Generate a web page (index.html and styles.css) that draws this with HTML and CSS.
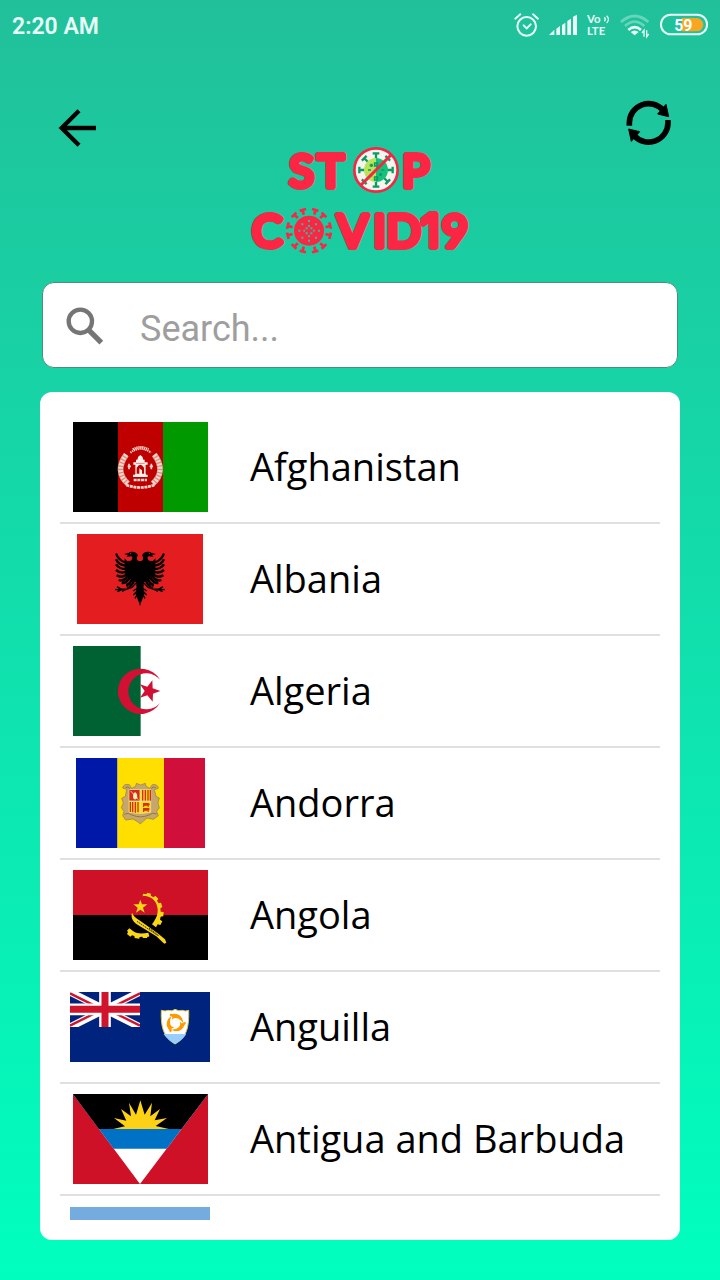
FILE: index.html
```html
<!DOCTYPE html>
<html lang="en">
<head>
<meta charset="utf-8">
<meta name="viewport" content="width=device-width, initial-scale=1">
<title>Stop Covid19</title>
<link rel="stylesheet" href="styles.css">
</head>
<body>
<div class="app">
  <div class="status">
    <span class="time">2:20 AM</span>
    <div class="status-icons">
      <svg width="26" height="50" viewBox="42 0 78 150" fill="none" stroke="#e9fff8" stroke-width="6" stroke-linecap="round" aria-hidden="true"><circle cx="80" cy="79" r="28"/><path d="M71 76l9 9 12-12M46 56l15-13M99 43l15 13"/></svg>
      <svg width="30" height="50" viewBox="144 0 90 150" fill="#e9fff8" aria-hidden="true"><path d="M147 105l16-16v16zM169 86l11-8v27h-11zM186 75l10-7v37h-10zM202 63l11-7v49h-11zM219 50l12-6v61h-12z"/></svg>
      <svg class="volte" width="26" height="50" viewBox="258 0 78 150" aria-hidden="true"><text x="261" y="70">Vo</text><text x="261" y="105">LTE</text><path d="M313 52q6 6 0 12M320 47q11 11 0 22" fill="none" stroke="#e9fff8" stroke-width="4"/></svg>
      <svg width="32" height="50" viewBox="360 0 96 150" fill="none" stroke="#e9fff8" stroke-width="8" aria-hidden="true"><path opacity=".35" d="M363 66q41-36 82 0"/><path opacity=".35" d="M375 78q29-26 58 0"/><path d="M385 90q19-17 38 0"/><path d="M404 106l-12-10q12-9 24 0z" fill="#e9fff8" stroke="none"/><path stroke-width="4" d="M432 110V91l-6 8M440 91v19l6-8"/></svg>
      <svg class="battery" width="48" height="50" viewBox="480 0 144 150" aria-hidden="true"><path d="M546 54h44a19 19 0 0 1 0 40h-44z" fill="#f6a623"/><rect x="483" y="44" width="138" height="59" rx="29" fill="none" stroke="#e9fff8" stroke-width="6"/><text x="550" y="92" text-anchor="middle">59</text></svg>
    </div>
  </div>

  <header class="header">
    <button class="icon-button" type="button" aria-label="Back"><svg width="40" height="40" viewBox="57 54 120 120" fill="none" stroke="#000" stroke-width="13" aria-hidden="true"><path d="M171 114H70M120 62l-52 52 52 52"/></svg></button>
    <h1 class="logo" aria-label="Stop Covid19">
      <svg width="240" height="120" viewBox="0 0 720 360">
        <g class="logo-text"><text x="148" y="140">S</text><text x="232" y="140">T</text><text x="486" y="140">P</text><text x="36" y="322">C</text><text x="292" y="322">V</text><text x="400" y="322">I</text><text x="439" y="322">D</text><text class="one" x="544" y="322">1</text><text x="605" y="322">9</text></g>
        <circle cx="408" cy="90" r="65" fill="#f7f3ee" stroke="#f32743" stroke-width="8"/>
        <g stroke="#0a9b62" stroke-width="7" fill="none">
          <path id="spike" d="M408 56V41M398 40h20"/>
          <use href="#spike" transform="rotate(45 408 90)"/><use href="#spike" transform="rotate(90 408 90)"/><use href="#spike" transform="rotate(135 408 90)"/><use href="#spike" transform="rotate(180 408 90)"/><use href="#spike" transform="rotate(225 408 90)"/><use href="#spike" transform="rotate(270 408 90)"/><use href="#spike" transform="rotate(315 408 90)"/>
        </g>
        <path d="M408 54a36 36 0 0 0 0 72z" fill="#b8e35a"/><path d="M408 54a36 36 0 0 1 0 72z" fill="#14c27d"/>
        <path d="M394 71v10M389 76h10M384 90h9M388 107h9M404 69h8v9h-8zM404 111h8v9h-8zM422 99v9M417 104h9M424 90h9" stroke="#0a9b62" stroke-width="5" fill="none"/>
        <path d="M363 135L453 45" stroke="#f32743" stroke-width="9"/>
        <g stroke="#fb2643" stroke-width="8" fill="none">
          <g id="pair"><path d="M223 224l3-13M216 207l19 5M191 224l-3-13M198 207l-19 5"/></g>
          <use href="#pair" transform="rotate(60 207 272)"/><use href="#pair" transform="rotate(120 207 272)"/><use href="#pair" transform="rotate(180 207 272)"/><use href="#pair" transform="rotate(240 207 272)"/><use href="#pair" transform="rotate(300 207 272)"/>
        </g>
        <circle cx="207" cy="272" r="45" fill="#fb2643"/>
        <path d="M204 240h6v6h-6zM204 299h6v6h-6zM175 269h6v6h-6zM234 269h6v6h-6zM184 250h6v6h-6zM225 250h6v6h-6zM184 290h6v6h-6zM225 290h6v6h-6zM197 262h6v6h-6zM211 262h6v6h-6zM197 277h6v6h-6zM211 277h6v6h-6zM190 269h5v6h-5zM219 269h5v6h-5zM204 255h6v5h-6zM204 286h6v5h-6z" fill="#1cc99f"/>
      </svg>
    </h1>
    <button class="icon-button refresh" type="button" aria-label="Refresh"><svg width="46" height="46" viewBox="46 27 138 138" aria-hidden="true"><g id="arc"><path d="M56 104V96A58 58 0 0 1 158 58" fill="none" stroke="#000" stroke-width="17"/><path d="M166 40l8 37-33-8z" stroke="#000" stroke-width="3" stroke-linejoin="round"/></g><use href="#arc" transform="rotate(180 114 95.500)"/></svg></button>
  </header>

  <main class="content">
    <label class="search">
      <svg width="38" height="38" viewBox="107 97 114 114" fill="none" stroke="#757575" aria-hidden="true"><circle cx="150" cy="140" r="35" stroke-width="13"/><path d="M174 165l39 39" stroke-width="16"/></svg>
      <input type="search" placeholder="Search..." aria-label="Search">
    </label>

    <section class="card">
      <ul class="countries">
        <li class="country"><span class="flag"><svg width="135" height="90" viewBox="39 21 405 270">
          <path d="M39 21h136v270H39z"/><path d="M174 21h136v270H174z" fill="#be0000"/><path d="M309 21h135v270H309z" fill="#009900"/>
          <g fill="none" stroke="#f4d8d0"><path d="M199 119c-23 30-24 62 5 87M283 119c23 30 24 62-5 87" stroke="#dc8c7c" stroke-width="18"/><path d="M199 119c-23 30-24 62 5 87M283 119c23 30 24 62-5 87" stroke-width="14" stroke-dasharray="6 4"/><path d="M211 113q30-23 62 0M218 103q24-14 48 0" stroke-width="6" stroke-dasharray="4 2"/><path d="M199 210q42 15 84 0M221 195h40" stroke-width="8" stroke-dasharray="9 2"/><path d="M207 146v17M203 154h10M274 146v17M269 154h10" stroke-width="5"/></g>
          <path fill="#fff0eb" d="M220 142h8v-8h4q1-10 9-14 8 4 9 14h4v8h9v7h-5v30h5v7h-44v-7h6v-30h-5z"/><path d="M230 176v-18q11-17 22 0v18h-6v-10l-8-6v16z" fill="#be0000"/><path d="M226 150v27M256 150v27M228 145h26" stroke="#be5144" stroke-width="2"/>
        </svg></span><span class="name">Afghanistan</span></li>
        <li class="country"><span class="flag"><svg width="126" height="90" viewBox="51 21 378 270">
          <path d="M51 21h378v270H51z" fill="#e41e20"/>
          <g id="eagle"><path d="M241 103l-7-2c-8-8 0-12-1-18-5-11-21-11-28-5l-13 3 12 3-5 5 15-1c5 3 4 7-1 13l-12 1-7-8v30l2 24 20 11 12 7 2 20-4 13 7 18 8 20z"/><path d="M196 106c-12-3-22-11-28-26M196 116c-12-1-22-6-28-19M196 126c-12 0-21-4-28-14M196 135c-10 3-20 1-28-6M198 144c-9 6-18 7-28 1M202 150c-8 10-17 12-26 9M209 153c-7 11-13 16-24 15M216 156c-4 11-9 17-18 18M222 160c-3 10-7 16-14 18" fill="none" stroke="#000" stroke-width="7"/><path d="M228 168l-12 13-16-1M216 181l-15 5-36 2M186 188l-15-9M186 188l-14 6M201 186l-15 7M232 184l-13 8M232 192l-12 12M233 200l-8 14" fill="none" stroke="#000" stroke-width="4"/><circle cx="212" cy="80" r="2" fill="#e41e20"/></g>
          <use href="#eagle" transform="translate(480 0) scale(-1 1)"/>
        </svg></span><span class="name">Albania</span></li>
        <li class="country"><span class="flag"><svg width="135" height="90" viewBox="39 18 405 270">
          <path d="M39 18h405v270H39z" fill="#fff"/><path d="M39 18h203v270H39z" fill="#006233"/><path d="M300 119a68 68 0 1 0 0 70a54 54 0 1 1 0-70zM301 153l-23-8-1-24-15 19-22-7 14 20-14 20 22-7 16 19 1-24z" fill="#d21034"/>
        </svg></span><span class="name">Algeria</span></li>
        <li class="country"><span class="flag"><svg width="129" height="90" viewBox="48 18 387 270">
          <path d="M48 18h125v270H48z" fill="#0018a8"/><path d="M172 18h141v270H172z" fill="#fedf00"/><path d="M312 18h123v270H312z" fill="#d0103a"/>
          <path d="M229 94l13 5 14-5 2 9 11 6 8-11q16-3 18 11l-12 4 5 20 10 5-4 15 4 15-8 10 5 13-15 11-19-4-14 12-6 6-7-6-15-9-22 3-9-13 4-13-8-11 6-14-5-14 11-6 4-21-12-4q3-14 20-10l7 11 12-6z" fill="#c6a76b" stroke="#917a51" stroke-width="2"/>
          <path d="M207 113h65v68q-32 7-65 0z" fill="#fedf00" stroke="#ead9b2" stroke-width="2"/><path d="M208 114h31v32h-31z" fill="#d52b1e"/><path d="M219 138l1-12 5-6 6 6 1 12-7 5z" fill="#fff0a0"/><path d="M212 117l23 26" stroke="#fff" stroke-width="2"/><path d="M248 114v32M256 114v32M264 114v32M271 114v32M211 150v30M218 150v31M226 150v32M234 150v31" stroke="#d52b1e" stroke-width="4"/><path d="M249 153h17l4 4-4 4v4h-3v-4h-9l-2 4h-3zM249 168h17l4 3-4 4v5h-3v-4h-9l-2 4h-3z" fill="#d52b1e"/><path d="M207 148h65M241 113v70" stroke="#ead9b2" stroke-width="3"/><path d="M193 187q11-7 23 2 25 11 51 0 11-9 23-3M197 107q8-7 13 4M287 107q-8-7-13 4" fill="none" stroke="#8f774b" stroke-width="3"/>
        </svg></span><span class="name">Andorra</span></li>
        <li class="country"><span class="flag"><svg width="135" height="90" viewBox="39 18 405 270">
          <path d="M39 18h405v136H39z" fill="#ce1126"/><path d="M39 153h405v135H39z"/>
          <g fill="#f9d616"><path d="M241 107l5 14h16l-13 10 5 15-13-9-13 9 5-15-13-10h16z"/><path d="M248 102l1-13 11 2 1-5 12 3-1 6 9 5 5-5 9 9-4 6 5 8 7-2 4 13-6 4 1 10 9 1-1 13-8 1-2 9 7 5-6 11-8-2-5 9-12-9c13-17 20-33 16-52-4-20-18-33-44-34z"/><path d="M208 193l11 8c14 10 30 8 46 5l3 11-4 2-2-1-1 4h-12l-2-4-8 1-1 5-14-2-1-6-7-2-5 4-10-8 3-6-3-4z"/><path d="M216 146c-4 12 1 24 12 33l61 38 24 22 6-3-4-10-23-19-54-38q-17-11-22-23z"/></g><path d="M231 172l63 43M267 192l29 23" stroke="#3d3505" stroke-width="3" stroke-dasharray="5 2"/>
        </svg></span><span class="name">Angola</span></li>
        <li class="country"><span class="flag"><svg width="140" height="70" viewBox="30 36 420 210">
          <path d="M30 36h420v210H30z" fill="#00247d"/><svg x="30" y="36" width="210" height="105" viewBox="0 0 210 105"><path d="M0 0l210 105M210 0L0 105" stroke="#fff" stroke-width="22"/><path d="M0 4l96 48M114 52L210 4M96 53L0 101M114 53l96 48" stroke="#cf142b" stroke-width="7"/><path d="M105 0v105M0 52h210" stroke="#fff" stroke-width="35"/><path d="M105 0v105M0 52h210" stroke="#cf142b" stroke-width="21"/></svg>
          <path d="M304 91q12 4 20 0 13 4 21-3 12 7 22 3 8 4 19 0c1 45-3 80-41 101-37-21-43-56-41-101z" fill="#fff" stroke="#d9c94c" stroke-width="3"/><path d="M311 162h68q-11 19-34 29-22-10-34-29z" fill="#99ccff"/>
          <g fill="#ff9900"><path id="dolphin" d="M330 107l-1-6 8 1q20-3 30 14l3 13-8-8q-9-9-19-7l-7 5 1-8z"/><use href="#dolphin" transform="rotate(120 346 129)"/><use href="#dolphin" transform="rotate(240 346 129)"/></g>
        </svg></span><span class="name">Anguilla</span></li>
        <li class="country"><span class="flag"><svg width="135" height="90" viewBox="129 27 405 270">
          <path d="M129 27h405v270H129z" fill="#ce1126"/><path d="M129 27h405L330 297z" fill="#fff"/><path d="M129 27h405L410 191H251z" fill="#0072c6"/><path d="M129 27h405l-80 105H207z"/><path d="M249 132l36-8-33-25 37 8-16-35 30 22-6-41 21 36 13-43 13 43 22-36-5 41 29-22-16 34 37-7-34 24 40 9z" fill="#fcd116"/>
        </svg></span><span class="name">Antigua and Barbuda</span></li>
        <li class="country"><span class="flag"><svg width="140" height="88" viewBox="0 0 140 88"><path d="M0 0h140v88H0z" fill="#74acdf"/><path d="M0 29h140v30H0z" fill="#fff"/><circle cx="70" cy="44" r="10" fill="#f6b40e"/></svg></span></li>
      </ul>
    </section>
  </main>
</div>
</body>
</html>
```
FILE: styles.css
```css
* {
  box-sizing: border-box;
}

body {
  margin: 0;
  font-family: Roboto, "Liberation Sans", sans-serif;
}

svg {
  display: block;
}

.app {
  display: flex;
  flex-direction: column;
  height: 100vh;
  background: linear-gradient(#21c09a, #00ffbf);
}

.status {
  display: flex;
  justify-content: space-between;
  align-items: center;
  height: 50px;
  padding: 0 12px;
}

.time {
  padding-top: 2px;
  color: #e9fff8;
  font-size: 23px;
  font-weight: 600;
}

.status-icons {
  display: flex;
  gap: 8px;
}

.volte text {
  fill: #e9fff8;
  font: 700 34px Lato, sans-serif;
}

.battery text {
  fill: #fff;
  font: 700 48px Roboto, sans-serif;
}

.header {
  display: grid;
  grid-template-columns: 1fr auto 1fr;
  align-items: start;
  padding: 50px 48px 22px;
}

.icon-button {
  justify-self: start;
  margin: 8px 0 0 10px;
  padding: 0;
  border: 0;
  background: none;
  color: #000;
}

.refresh {
  justify-self: end;
  margin: 0;
}

.logo {
  margin: 40px 0 0;
}

.logo-text {
  fill: #fb2643;
  stroke: #fb2643;
  stroke-width: 18px;
  stroke-linejoin: round;
  font: 400 136px Lato, sans-serif;
}

.one {
  font-family: Inter, sans-serif;
}

.content {
  display: flex;
  flex: 1;
  flex-direction: column;
  gap: 24px;
  min-height: 0;
  padding: 0 40px 40px;
}

.search {
  display: flex;
  flex-shrink: 0;
  align-items: center;
  gap: 36px;
  height: 86px;
  margin: 0 2px;
  padding: 2px 23px 0;
  border: 1px solid #4b8f7b;
  border-radius: 12px;
  background: #fff;
}

.search input {
  flex: 1;
  min-width: 0;
  padding: 6px 0 0;
  border: 0;
  outline: 0;
  background: none;
  font: 36px Roboto, sans-serif;
}

.search input::placeholder {
  color: #9e9e9e;
}

.card {
  flex: 1;
  min-height: 0;
  padding: 20px;
  border-radius: 12px;
  background: #fff;
}

.countries {
  height: 100%;
  margin: 0;
  padding: 0;
  overflow: hidden;
  list-style: none;
}

.country {
  display: flex;
  align-items: center;
  gap: 40px;
  height: 112px;
  padding: 0 10px;
  border-bottom: 2px solid #e0e0e0;
}

.flag {
  display: flex;
  flex: 0 0 140px;
  justify-content: center;
}

.name {
  padding-bottom: 2px;
  color: #000;
  font: 500 38px "Open Sans", sans-serif;
}
```
